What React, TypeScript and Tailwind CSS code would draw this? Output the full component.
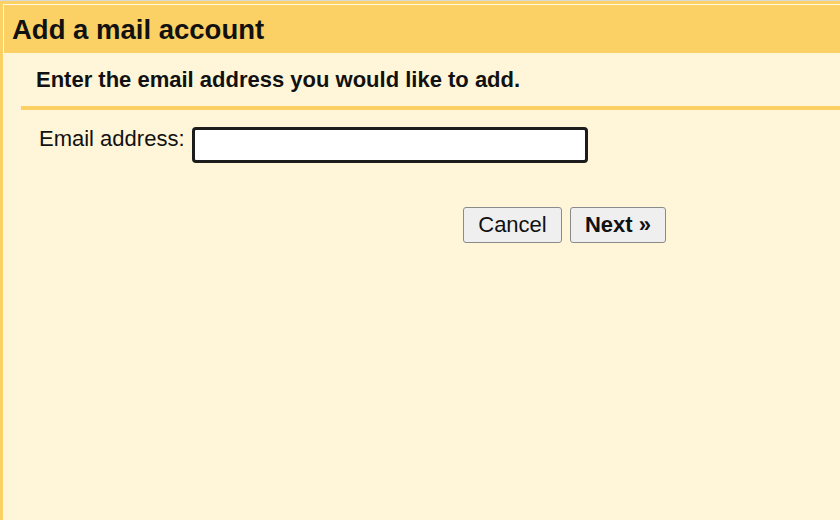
export default function App() {
  return (
    <div
      className="w-[840px] h-[520px] overflow-hidden bg-[#fff6d9] border-t border-[#d9d9d9] text-[#111]"
      style={{ fontFamily: '"Liberation Sans", Arial, sans-serif' }}
    >
      <div className="h-full border-t-[3px] border-l-[3px] border-[#fbd165] pt-px pl-px bg-[#fff8e0]">
        <div className="h-[48px] bg-[#fbd165] pl-[8px] flex items-center">
          <h1 className="text-[27.5px] leading-[32px] font-bold pt-[1px]">Add a mail account</h1>
        </div>
        <div className="bg-[#fff6d9] h-full">
          <div className="pt-[14px] pl-[32px] text-[22px] leading-[26px] font-bold">
            Enter the email address you would like to add.
          </div>
          <div className="mt-[13px] ml-[17px] h-[4px] bg-[#fbd165]" />
          <div className="mt-[17px] pl-[35px] flex items-start gap-[7px]">
            <label className="text-[22px] leading-[22px] whitespace-nowrap pt-px">Email address:</label>
            <input
              type="text"
              className="w-[396px] h-[36px] bg-white border-[3px] border-[#1c1c1c] rounded-[4px] outline-none px-1"
            />
          </div>
          <div className="mt-[44px] pl-[459px] flex gap-[8px]">
            <button className="w-[99px] h-[36px] bg-[#efefef] border border-[#8a8a8a] rounded-[3px] text-[22px] leading-none text-[#111]">
              Cancel
            </button>
            <button className="w-[96px] h-[36px] bg-[#efefef] border border-[#8a8a8a] rounded-[3px] text-[22px] leading-none font-bold text-[#111]">
              Next »
            </button>
          </div>
        </div>
      </div>
    </div>
  );
}
